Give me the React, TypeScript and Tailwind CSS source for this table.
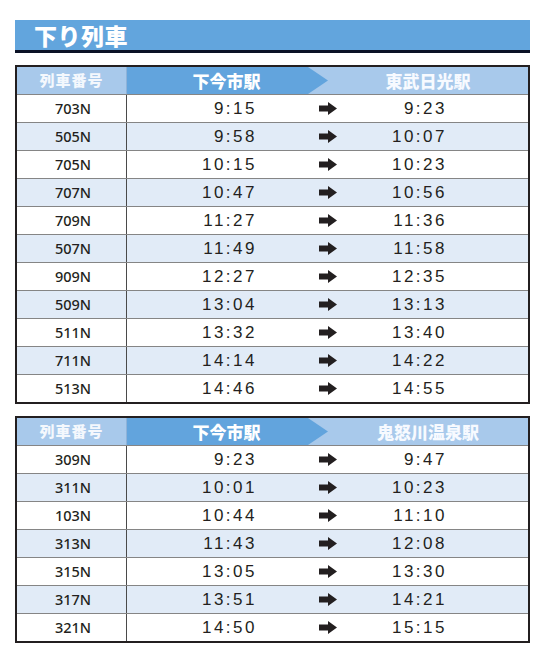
import React from "react";

type Row = [string, string, string];

const t1: Row[] = [
  ["703N", "9:15", "9:23"],
  ["505N", "9:58", "10:07"],
  ["705N", "10:15", "10:23"],
  ["707N", "10:47", "10:56"],
  ["709N", "11:27", "11:36"],
  ["507N", "11:49", "11:58"],
  ["909N", "12:27", "12:35"],
  ["509N", "13:04", "13:13"],
  ["511N", "13:32", "13:40"],
  ["711N", "14:14", "14:22"],
  ["513N", "14:46", "14:55"],
];

const t2: Row[] = [
  ["309N", "9:23", "9:47"],
  ["311N", "10:01", "10:23"],
  ["103N", "10:44", "11:10"],
  ["313N", "11:43", "12:08"],
  ["315N", "13:05", "13:30"],
  ["317N", "13:51", "14:21"],
  ["321N", "14:50", "15:15"],
];

const jp = "font-['Noto_Sans_CJK_JP','Noto_Sans',sans-serif]";

function Arrow() {
  return (
    <svg width="18" height="13" viewBox="0 0 18 13" className="block">
      <path d="M0 3.5H9V0L18 6.5L9 13V9.5H0Z" fill="#231f20" />
    </svg>
  );
}

function Table({ dest, rows }: { dest: string; rows: Row[] }) {
  return (
    <div className="w-[515px] border-2 border-[#231f20]">
      <div className={`flex h-[27px] bg-[#a8c9eb] text-white font-extrabold ${jp}`}>
        <div className="w-[110px] shrink-0 flex items-center justify-center text-[15px] tracking-[1px] text-[#f4f8fd] border-r border-[#8fb3d9]">
          列車番号
        </div>
        <div className="w-[201px] shrink-0 flex items-center justify-center pr-[2px] bg-[#62a4dd] text-[17px] [clip-path:polygon(0_0,181px_0,201px_50%,181px_100%,0_100%)]">
          下今市駅
        </div>
        <div className="flex-1 flex items-center justify-center text-[17px] text-[#f7faff]">
          {dest}
        </div>
      </div>
      {rows.map((r, i) => (
        <div
          key={r[0]}
          className={`flex h-[28px] border-t border-[#858585] ${i % 2 === 1 ? "bg-[#e1ebf7]" : "bg-white"}`}
        >
          <div className="w-[110px] shrink-0 flex items-center justify-center pl-[3px] border-r border-[#4a4a4a] font-['Noto_Sans',sans-serif] font-medium text-[14.5px] text-[#231f20]">
            {r[0]}
          </div>
          <div className="w-[130px] shrink-0 flex items-center justify-end font-['Liberation_Sans',sans-serif] text-[17px] tracking-[2.5px] text-[#231f20]">
            {r[1]}
          </div>
          <div className="w-[62px] shrink-0 flex items-center pl-[63px] overflow-visible">
            <span className="-ml-[1px]">
              <Arrow />
            </span>
          </div>
          <div className="w-[127px] shrink-0 flex items-center justify-end font-['Liberation_Sans',sans-serif] text-[17px] tracking-[2.5px] text-[#231f20]">
            {r[2]}
          </div>
        </div>
      ))}
    </div>
  );
}

export default function App() {
  return (
    <div className="w-[547px] h-[659px] bg-white pt-[20px] pl-[15px]">
      <div className="w-[515px]">
        <div className={`h-[30px] bg-[#62a5dd] flex items-center pl-[19px] text-white font-black text-[23px] tracking-[0.5px] ${jp}`}>
          下り列車
        </div>
        <div className="h-[3px] bg-[#0b1226]" />
      </div>
      <div className="mt-[12px]">
        <Table dest="東武日光駅" rows={t1} />
      </div>
      <div className="mt-[12px]">
        <Table dest="鬼怒川温泉駅" rows={t2} />
      </div>
    </div>
  );
}
